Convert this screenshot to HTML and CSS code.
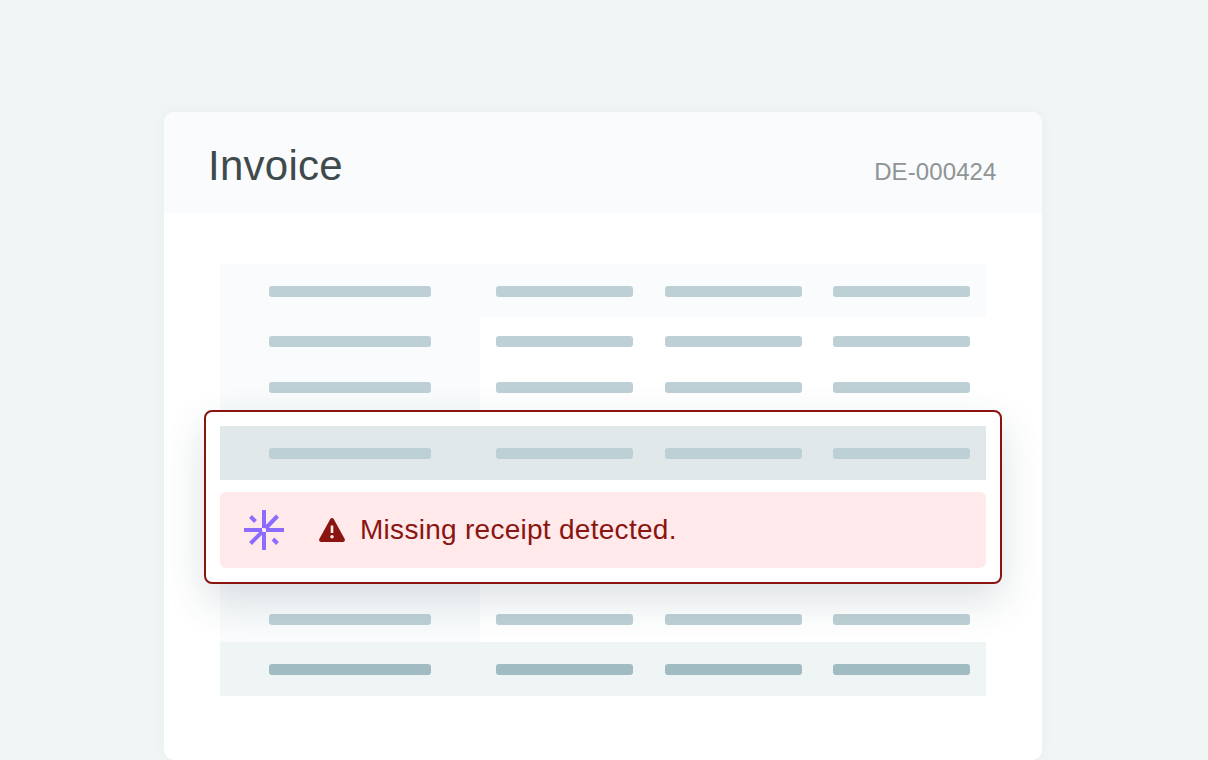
FILE: index.html
```html
<!DOCTYPE html>
<html lang="en">
<head>
  <meta charset="UTF-8">
  <title>Invoice</title>
  <link rel="stylesheet" href="styles.css">
</head>
<body>

<div class="card">
  <header class="card-head">
    <h1 class="card-title">Invoice</h1>
    <span class="card-number">DE-000424</span>
  </header>

  <div class="sheet">
    <div class="row row-head row-low">
      <div class="row-label"><span class="bar bar-wide"></span></div>
      <div class="row-cols"><span class="bar"></span><span class="bar"></span><span class="bar"></span></div>
    </div>
    <div class="row row-low">
      <div class="row-label"><span class="bar bar-wide"></span></div>
      <div class="row-cols"><span class="bar"></span><span class="bar"></span><span class="bar"></span></div>
    </div>
    <div class="row row-low">
      <div class="row-label"><span class="bar bar-wide"></span></div>
      <div class="row-cols"><span class="bar"></span><span class="bar"></span><span class="bar"></span></div>
    </div>

    <!-- these sit behind the alert box -->
    <div class="row"><div class="row-label"></div></div>
    <div class="row"><div class="row-label"></div></div>
    <div class="row"><div class="row-label"></div></div>
    <div class="row"><div class="row-label"></div></div>

    <div class="row row-low">
      <div class="row-label"><span class="bar bar-wide"></span></div>
      <div class="row-cols"><span class="bar"></span><span class="bar"></span><span class="bar"></span></div>
    </div>
    <div class="row row-total row-low">
      <div class="row-label"><span class="bar bar-wide"></span></div>
      <div class="row-cols"><span class="bar"></span><span class="bar"></span><span class="bar"></span></div>
    </div>
  </div>

  <!-- Flagged row with alert, lies over the sheet -->
  <div class="flagged">
    <div class="row row-flagged">
      <div class="row-label"><span class="bar bar-wide"></span></div>
      <div class="row-cols"><span class="bar"></span><span class="bar"></span><span class="bar"></span></div>
    </div>
    <div class="alert">
      <svg class="icon-spark" width="40" height="40" viewBox="0 0 40 40" fill="none" stroke="#8b6cff" stroke-width="4">
        <path d="M0 20H18M22 20H40M20 0V18M20 22V40"/>
        <path d="M33.500 6L21.500 18.500M18.500 21.500L6.500 33.500"/>
        <path d="M6.500 6.500L11.500 11.500M29 29L33.500 33.500"/>
      </svg>
      <svg class="icon-warn" width="26" height="24" viewBox="0 0 26 24">
        <path fill="#8a1510" fill-rule="evenodd" d="M11.300 1C12 -.2 14 -.2 14.700 1L25.700 20.900C26.400 22.200 25.500 24 24 24H2C.5 24 -.4 22.200 .3 20.900ZM11.700 7.500V15H14.300V7.500ZM13 17A1.800 1.800 0 1 0 13 20.600A1.800 1.800 0 1 0 13 17Z"/>
      </svg>
      <span class="alert-text">Missing receipt detected.</span>
    </div>
  </div>
</div>

</body>
</html>
```

FILE: styles.css
```css
* {
  box-sizing: border-box;
}
html, body {
  height: 100%;
}
body {
  margin: 0;
  padding: 112px 0 0 164px;
  background-color: #f0f5f5;
  font-family: "Liberation Sans", Arial, sans-serif;
  overflow: hidden;
}

/* Card */
.card {
  position: relative;
  width: 877.5px;
  height: 648px;
  background: #fff;
  border-radius: 10px;
  box-shadow: 0 0 12px rgba(190, 210, 215, 0.15);
  overflow: hidden;
}
.card-head {
  display: flex;
  align-items: baseline;
  justify-content: space-between;
  height: 101px;
  padding: 27px 45px 0 44px;
  background: #f9fbfc;
}
.card-title {
  margin: 0;
  font-size: 42px;
  font-weight: 400;
  line-height: 54px;
  letter-spacing: 0.25px;
  color: #3f4a4c;
}
.card-number {
  font-size: 24px;
  letter-spacing: 0.1px;
  color: #8f9495;
}

/* Sheet of placeholder rows */
.sheet {
  margin: 51px 55.5px 0 56px;
}
.row {
  display: flex;
  height: 46.4px;
}
.row-low > div {
  padding-top: 2px;
}
.row-label {
  display: flex;
  align-items: center;
  width: 260px;
  padding-left: 49px;
  background: #f9fbfc;
}
.row-cols {
  display: grid;
  grid-template-columns: repeat(3, 137px);
  column-gap: 31.5px;
  align-items: center;
  padding-left: 16px;
}
.bar {
  display: block;
  width: 137px;
  height: 11px;
  border-radius: 3px;
  background: #bdd0d5;
}
.bar-wide {
  width: 162px;
}
.row-head {
  height: 53px;
  background: #f9fbfc;
}
.row-total {
  height: 54.2px;
  background: #eff4f5;
}
.row-total .row-label {
  background: none;
}
.row-total .bar {
  background: #a0bcc2;
}

/* Flagged box */
.flagged {
  position: absolute;
  top: 298px;
  left: 40px;
  display: flex;
  flex-direction: column;
  gap: 12px;
  width: 798px;
  height: 174px;
  padding: 14px;
  background: #fff;
  border: 2px solid #8a1510;
  border-radius: 8px;
  box-shadow: 0 16px 40px rgba(40, 70, 80, 0.16);
}
.row-flagged {
  height: 54px;
  background: #e0e8ea;
}
.row-flagged .row-label {
  background: none;
}
.alert {
  display: flex;
  align-items: center;
  height: 76px;
  padding-left: 24px;
  background: #ffe9ea;
  border-radius: 6px;
}
.icon-spark {
  flex: none;
}
.icon-warn {
  flex: none;
  margin-left: 35px;
}
.alert-text {
  margin-left: 15px;
  font-size: 28px;
  letter-spacing: 0.28px;
  color: #8a1510;
}
```
